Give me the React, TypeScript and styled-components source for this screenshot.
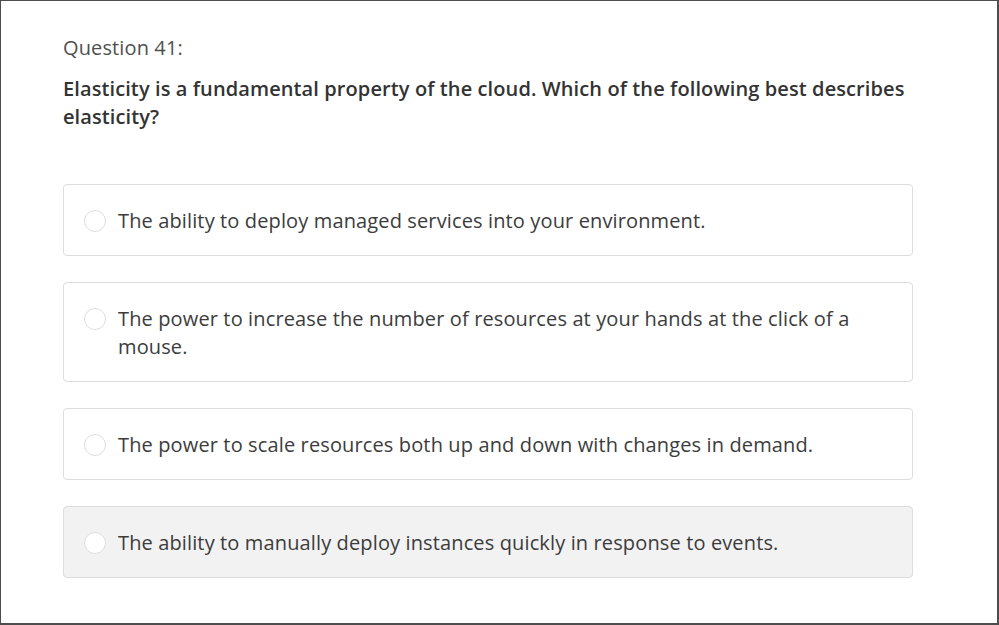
import React from "react";
import styled, { createGlobalStyle } from "styled-components";

const Global = createGlobalStyle`
  html, body { margin: 0; padding: 0; background: #fff; }
  body { font-family: "Open Sans", "Liberation Sans", sans-serif; }
  * { box-sizing: border-box; }
`;

const Frame = styled.div`
  width: 999px;
  height: 625px;
  border-top: 1px solid #4d4d4d;
  border-left: 1px solid #4d4d4d;
  border-right: 2px solid #4d4d4d;
  border-bottom: 2px solid #4d4d4d;
  padding: 33px 0 0 62px;
  background: #fff;
`;

const Label = styled.div`
  font-size: 20px;
  line-height: 28px;
  letter-spacing: 0.12px;
  color: #505050;
  font-weight: 400;
`;

const Prompt = styled.div`
  margin-top: 13px;
  width: 850px;
  font-size: 20px;
  line-height: 28px;
  letter-spacing: 0.1px;
  font-weight: 600;
  color: #333;
`;

const Options = styled.div`
  margin-top: 53px;
  width: 850px;
  display: flex;
  flex-direction: column;
  gap: 26px;
`;

const Option = styled.div<{ $muted?: boolean }>`
  display: flex;
  align-items: flex-start;
  gap: 12px;
  padding: 22px 20px 20px;
  border: 1px solid #dcdcdc;
  border-radius: 4px;
  background: ${(p) => (p.$muted ? "#f2f2f2" : "#fff")};
`;

const Radio = styled.span`
  flex: none;
  width: 22px;
  height: 22px;
  margin-top: 3px;
  border-radius: 50%;
  border: 1px solid #dedede;
  background: #fff;
`;

const OptionText = styled.div`
  font-size: 20px;
  line-height: 28px;
  letter-spacing: 0.13px;
  color: #3c3c3c;
`;

const options = [
  "The ability to deploy managed services into your environment.",
  "The power to increase the number of resources at your hands at the click of a mouse.",
  "The power to scale resources both up and down with changes in demand.",
  "The ability to manually deploy instances quickly in response to events.",
];

export default function App() {
  return (
    <>
      <Global />
      <Frame>
        <Label>Question 41:</Label>
        <Prompt>
          Elasticity is a fundamental property of the cloud. Which of the following best describes elasticity?
        </Prompt>
        <Options>
          {options.map((o, i) => (
            <Option key={i} $muted={i === 3}>
              <Radio />
              <OptionText>{o}</OptionText>
            </Option>
          ))}
        </Options>
      </Frame>
    </>
  );
}
